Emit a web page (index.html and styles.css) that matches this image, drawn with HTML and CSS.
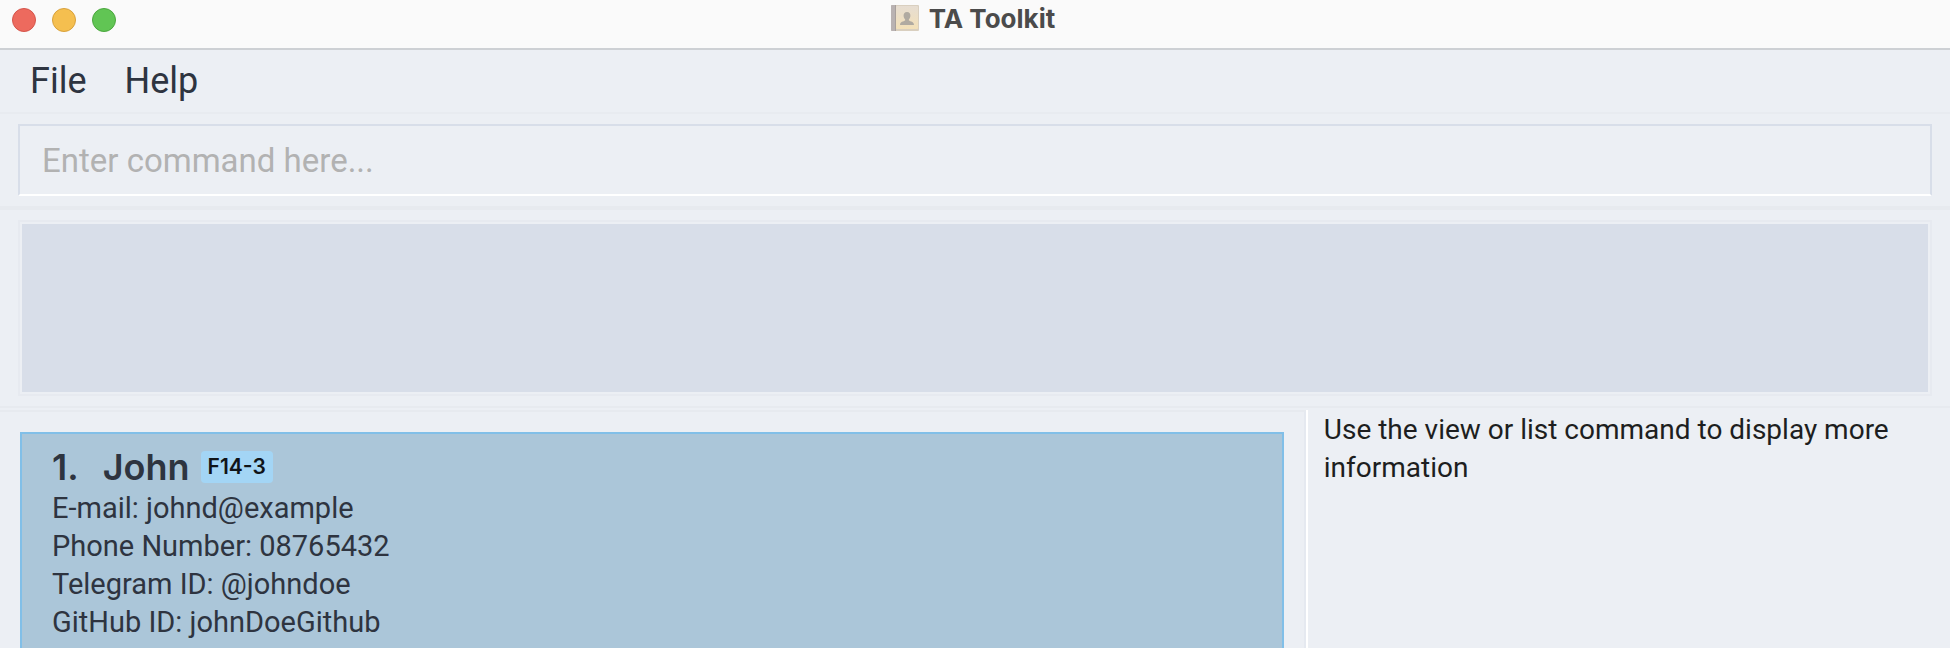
FILE: index.html
```html
<!DOCTYPE html>
<html lang="en">
<head>
<meta charset="utf-8">
<title>TA Toolkit</title>
<link rel="stylesheet" href="styles.css">
</head>
<body>
<div class="window">
  <header class="titlebar">
    <div class="controls">
      <button class="control close" aria-label="Close"></button>
      <button class="control minimize" aria-label="Minimize"></button>
      <button class="control maximize" aria-label="Maximize"></button>
    </div>
    <h1 class="title">
      <svg class="title-icon" viewBox="0 0 28 28" aria-hidden="true">
        <defs>
          <linearGradient id="cover" x1="0" y1="0" x2="0" y2="1">
            <stop offset="0" stop-color="#e6ddd2"/>
            <stop offset="1" stop-color="#f3e0b8"/>
          </linearGradient>
        </defs>
        <rect x="0" y="0" width="28" height="26" rx="1" fill="#d9cfbf"/>
        <rect x="5" y="1" width="22" height="23" rx="1" fill="url(#cover)"/>
        <path d="M1 0h3v26H1a1 1 0 0 1-1-1V1a1 1 0 0 1 1-1z" fill="#b9b2b2"/>
        <path d="M4 0h1v26H4z" fill="#a8a09c"/>
        <path d="M16 7c2.500 0 3.600 1.700 3.400 4-.1 1.500-.8 2.600-1.500 3.300v1.200c1.500 1 5 1.100 5.100 4.500H9c.1-3.400 3.600-3.500 5.100-4.500v-1.200c-.7-.7-1.400-1.800-1.500-3.300C12.400 8.700 13.500 7 16 7z" fill="#b0aaa1"/>
      </svg>
      <span>TA Toolkit</span>
    </h1>
  </header>
  <nav class="menubar">
    <button class="menu">File</button>
    <button class="menu">Help</button>
  </nav>
  <div class="command-pane">
    <input class="command" type="text" placeholder="Enter command here..." aria-label="Command">
  </div>
  <div class="result-pane">
    <output class="result" aria-label="Result"></output>
  </div>
  <main class="split">
    <section class="list-pane">
      <article class="card">
        <div class="card-head">
          <h2 class="name"><span>1.</span><span>John</span></h2>
          <span class="tag">F14-3</span>
        </div>
        <p>E-mail: johnd@example</p>
        <p>Phone Number: 08765432</p>
        <p>Telegram ID: @johndoe</p>
        <p>GitHub ID: johnDoeGithub</p>
      </article>
    </section>
    <section class="detail-pane">
      <p>Use the view or list command to display more information</p>
    </section>
  </main>
</div>
</body>
</html>
```
FILE: styles.css
```css
* { box-sizing: border-box; }

body {
  margin: 0;
  background: #eceff4;
  color: #2e3440;
  font-family: Roboto, "Liberation Sans", sans-serif;
  font-size: 29px;
  line-height: 38px;
}

h1, h2, p { margin: 0; }

button {
  padding: 0;
  border: 0;
  background: none;
  color: inherit;
  font: inherit;
}

.window {
  display: flex;
  flex-direction: column;
  height: 100vh;
  overflow: hidden;
}

.titlebar {
  display: grid;
  grid-template-columns: 1fr auto 1fr;
  align-items: start;
  flex: none;
  padding: 0 16px 10px 12px;
  border-bottom: 2px solid #cdd0d4;
  background: #fafafa;
}

.controls {
  display: flex;
  gap: 16px;
  padding-top: 8px;
}

.control {
  width: 24px;
  height: 24px;
  border: 1px solid;
  border-radius: 50%;
}

.close { background: #ed6a5e; border-color: #d5554b; }
.minimize { background: #f5bf4f; border-color: #d8a13c; }
.maximize { background: #61c554; border-color: #4ba73e; }

.title {
  display: flex;
  align-items: center;
  gap: 10px;
  color: #4b4b4b;
  font-family: Inter, sans-serif;
  font-size: 26px;
  font-weight: 700;
}

.title-icon {
  width: 28px;
  height: 28px;
}

.menubar {
  display: flex;
  gap: 38px;
  flex: none;
  padding: 12px 30px;
  border-bottom: 2px solid #e8ebf0;
  font-size: 36px;
}

.command-pane {
  flex: none;
  padding: 10px 18px;
  border-bottom: 4px solid #e7eaef;
}

.command {
  display: block;
  width: 100%;
  height: 72px;
  padding: 0 22px;
  border: 2px solid #d8dee9;
  border-bottom-color: #fff;
  border-radius: 0;
  outline: 0;
  background: #eceff4;
  color: inherit;
  font: inherit;
  font-size: 33px;
}

.command::placeholder { color: #b2b2b2; opacity: 1; }

.result-pane {
  flex: none;
  padding: 10px 18px;
  border-bottom: 2px solid #e7eaef;
}

.result {
  display: block;
  height: 176px;
  padding: 2px;
  border: 2px solid #e7eaf0;
  background: #d8dee9 content-box;
}

.split {
  display: grid;
  grid-template-columns: 75fr 37fr;
  flex: 1;
  min-height: 0;
  padding-top: 2px;
}

.list-pane {
  padding: 20px 20px 0;
  border-top: 2px solid #e7eaef;
  border-right: 2px solid #e5e9f0;
}

.card {
  height: 100%;
  min-height: 240px;
  padding: 14px 30px;
  border: 2px solid #81bfe8;
  border-bottom: 0;
  background: #abc6d9;
}

.card-head {
  display: flex;
  align-items: center;
  gap: 11px;
  padding-bottom: 3px;
}

.name {
  display: flex;
  gap: 24px;
  font-family: Inter, sans-serif;
  font-size: 36px;
  font-weight: 600;
}

.tag {
  padding: 0 7px;
  border-radius: 4px;
  background: #a3d5f5;
  color: #101418;
  font-family: Inter, sans-serif;
  font-size: 21px;
  font-weight: 600;
  line-height: 32px;
}

.detail-pane {
  padding: 1px 16px;
  border-left: 2px solid #fff;
  color: #1d1e20;
  font-size: 28px;
}
```
